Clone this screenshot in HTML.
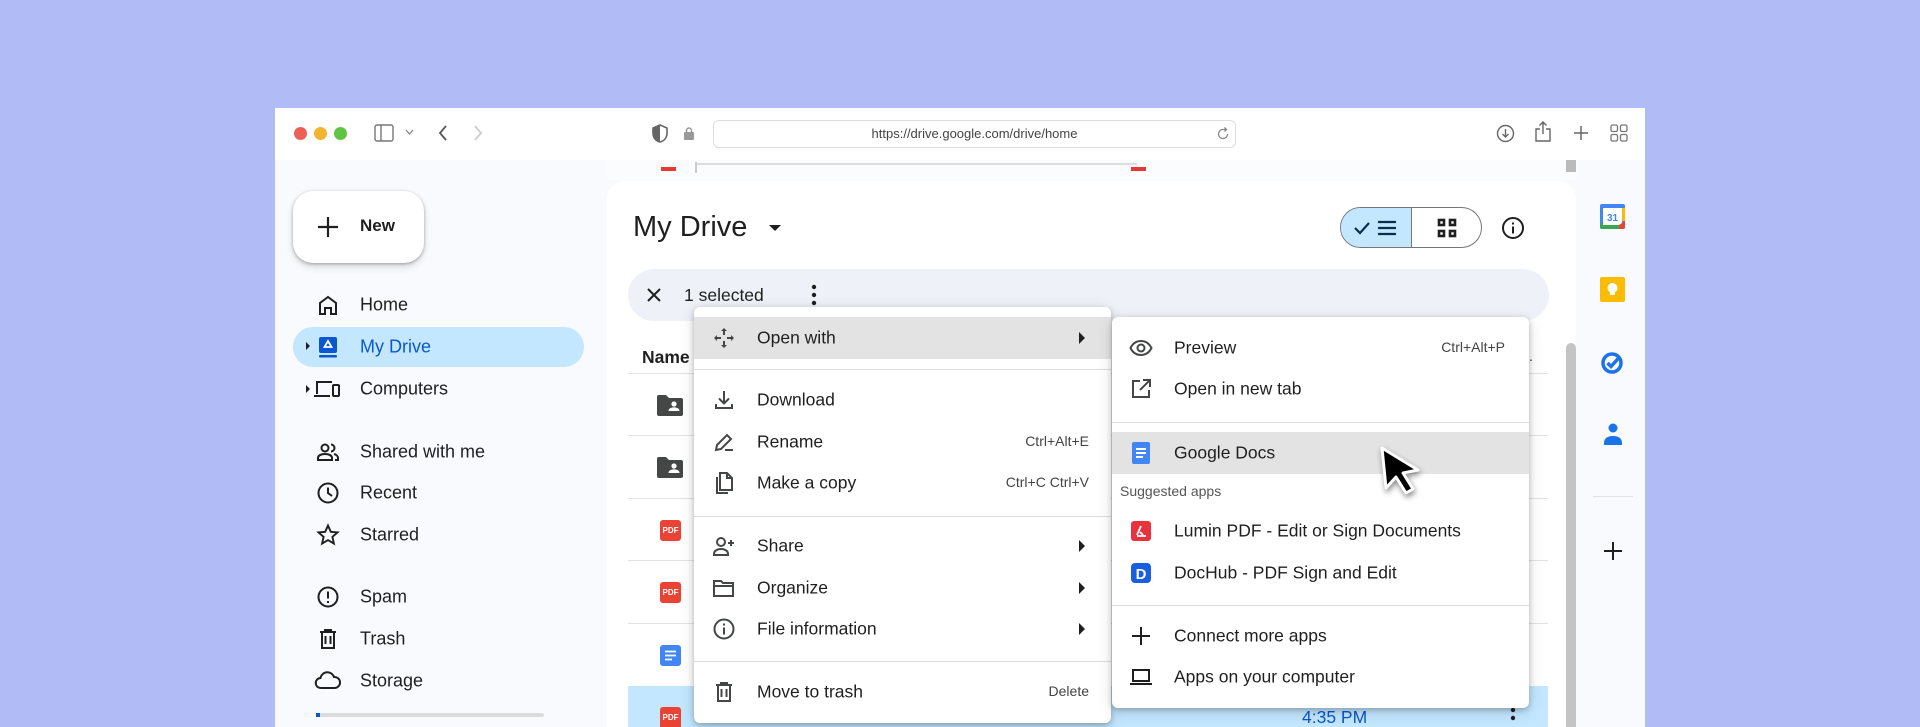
<!DOCTYPE html>
<html style="overflow:hidden;height:727px"><head><meta charset="utf-8"><style>
*{margin:0;padding:0;box-sizing:border-box}
html,body{overflow:hidden}
body{width:1920px;height:727px;background:#b1bbf6;font-family:"Liberation Sans",Arial,sans-serif;color:#1f1f1f;position:relative}
.a{position:absolute}
.win{left:275px;top:108px;width:1370px;height:619px;background:#f8fafd;overflow:hidden}
.tb{left:0;top:0;width:1370px;height:52px;background:#fff}
.nav{position:absolute;left:360px;font-size:18px;color:#1f1f1f;transform:translateY(-50%)}
.ni{position:absolute;left:316px;width:24px;height:24px;transform:translateY(-50%)}
.menu{background:#fff;border-radius:6px;box-shadow:0 2px 6px rgba(0,0,0,.25),0 4px 16px rgba(0,0,0,.12)}
.mi{position:absolute;font-size:17.5px;color:#1f1f1f;transform:translateY(-50%);white-space:nowrap}
.sc{position:absolute;font-size:14px;color:#444;transform:translateY(-50%);text-align:right}
.ic{position:absolute;width:24px;height:24px;transform:translate(-50%,-50%)}
.sep{position:absolute;height:1px;background:#ddd}
.rs{position:absolute;left:628px;width:920px;height:1px;background:#e3e3e3}
#clip{position:absolute;left:0;top:0;width:1920px;height:727px;overflow:hidden}
</style></head><body><div id="clip">
<div class="a win">
 <div class="a tb"></div>
</div>
<div class="a" style="left:294px;top:127px;width:13px;height:13px;border-radius:50%;background:#ec5f57"></div>
<div class="a" style="left:314px;top:127px;width:13px;height:13px;border-radius:50%;background:#f3b52f"></div>
<div class="a" style="left:334px;top:127px;width:13px;height:13px;border-radius:50%;background:#5ec441"></div>
<svg class="a" style="left:374px;top:124px" width="20" height="18" viewBox="0 0 20 18" fill="none" stroke="#777" stroke-width="1.4"><rect x="1" y="1" width="18" height="16" rx="2"/><line x1="7" y1="1" x2="7" y2="17"/></svg>
<svg class="a" style="left:405px;top:129px" width="9" height="7" viewBox="0 0 9 7" fill="none" stroke="#888" stroke-width="1.3"><path d="M1 1l3.5 4 3.5-4"/></svg>
<svg class="a" style="left:437px;top:124px" width="12" height="18" viewBox="0 0 12 18" fill="none" stroke="#555" stroke-width="1.8"><path d="M9 2L3 9l6 7"/></svg>
<svg class="a" style="left:472px;top:124px" width="12" height="18" viewBox="0 0 12 18" fill="none" stroke="#ccc" stroke-width="1.8"><path d="M3 2l6 7-6 7"/></svg>
<svg class="a" style="left:652px;top:124px" width="16" height="19" viewBox="0 0 16 19"><path d="M8 1L1 4v5c0 5 3 8 7 9 4-1 7-4 7-9V4z" fill="none" stroke="#666" stroke-width="1.6"/><path d="M8 1v17c-4-1-7-4-7-9V4z" fill="#666"/></svg>
<svg class="a" style="left:684px;top:127px" width="10" height="13" viewBox="0 0 10 13"><rect x="0" y="5" width="10" height="8" rx="1" fill="#999"/><path d="M2.5 5V3.5a2.5 2.5 0 015 0V5" fill="none" stroke="#999" stroke-width="1.5"/></svg>
<div class="a" style="left:713px;top:120px;width:523px;height:28px;border:1px solid #ddd;border-radius:6px;background:#fff;font-size:13px;color:#444;text-align:center;line-height:26px">https://drive.google.com/drive/home</div>
<svg class="a" style="left:1216px;top:127px" width="14" height="14" viewBox="0 0 14 14" fill="none" stroke="#888" stroke-width="1.3"><path d="M11.5 7A4.5 4.5 0 117 2.5h3M8.5 0.5l2 2-2 2"/></svg>
<svg class="a" style="left:1496px;top:124px" width="19" height="19" viewBox="0 0 19 19" fill="none" stroke="#666" stroke-width="1.4"><circle cx="9.5" cy="9.5" r="8"/><path d="M9.5 5v8M6.5 10l3 3 3-3"/></svg>
<svg class="a" style="left:1535px;top:121px" width="16" height="21" viewBox="0 0 16 21" fill="none" stroke="#666" stroke-width="1.4"><path d="M5 8H1v12h14V8h-4M8 13V1M4.5 4.5L8 1l3.5 3.5"/></svg>
<svg class="a" style="left:1573px;top:125px" width="16" height="16" viewBox="0 0 16 16" stroke="#666" stroke-width="1.5"><path d="M8 1v14M1 8h14"/></svg>
<svg class="a" style="left:1610px;top:124px" width="18" height="18" viewBox="0 0 18 18" fill="none" stroke="#777" stroke-width="1.3"><rect x="1" y="1" width="6.5" height="6.5" rx="1.5"/><rect x="10.5" y="1" width="6.5" height="6.5" rx="1.5"/><rect x="1" y="10.5" width="6.5" height="6.5" rx="1.5"/><rect x="10.5" y="10.5" width="6.5" height="6.5" rx="1.5"/></svg>

<div class="a" style="left:607px;top:160px;width:970px;height:20px;background:#fbfcfe"></div>
<div class="a" style="left:661px;top:167px;width:15px;height:4px;background:#e53935"></div>
<div class="a" style="left:695px;top:162px;width:2px;height:11px;background:#ccc"></div>
<div class="a" style="left:697px;top:163px;width:440px;height:2px;background:#ddd"></div>
<div class="a" style="left:1131px;top:167px;width:15px;height:4px;background:#e53935"></div>
<div class="a" style="left:1566px;top:160px;width:10px;height:12px;background:#bbb"></div>

<div class="a" style="left:607px;top:181px;width:969px;height:546px;background:#fff;border-radius:18px 18px 0 0"></div>

<div class="a" style="left:293px;top:191px;width:131px;height:72px;background:#fff;border-radius:20px;box-shadow:0 1px 3px rgba(0,0,0,.3),0 4px 8px rgba(0,0,0,.12)"></div>
<svg class="a" style="left:316px;top:215px" width="24" height="24" viewBox="0 0 24 24" stroke="#1f1f1f" stroke-width="2.2"><path d="M12 2v20M2 12h20"/></svg>
<div class="a" style="left:360px;top:216px;font-size:17px;font-weight:bold;color:#1f1f1f">New</div>

<div class="a" style="left:293px;top:327px;width:291px;height:40px;border-radius:20px;background:#c2e7ff"></div>
<svg class="ni" style="top:305px" viewBox="0 0 24 24" fill="none" stroke="#1f1f1f" stroke-width="2"><path d="M4 21V10l8-6 8 6v11h-5v-6H9v6z"/></svg><div class="nav" style="top:305px">Home</div>
<div class="a" style="left:306px;top:342px;border-left:4px solid #1f1f1f;border-top:4px solid transparent;border-bottom:4px solid transparent"></div>
<svg class="ni" style="top:347px" viewBox="0 0 24 24"><rect x="3" y="2" width="18" height="16" rx="2" fill="#0b57d0"/><rect x="3" y="20" width="18" height="2.5" rx="1" fill="#0b57d0"/><path d="M12 6l3.5 6h-7z" fill="none" stroke="#fff" stroke-width="1.8"/></svg><div class="nav" style="top:347px;color:#0b57d0">My Drive</div>
<div class="a" style="left:306px;top:385px;border-left:4px solid #1f1f1f;border-top:4px solid transparent;border-bottom:4px solid transparent"></div>
<svg class="ni" style="top:389px;left:313px;width:28px" viewBox="0 0 28 24" fill="none" stroke="#1f1f1f" stroke-width="2"><path d="M4 17V5h15M1 19h16"/><rect x="20" y="8" width="6" height="11" rx="1"/></svg><div class="nav" style="top:389px">Computers</div>
<svg class="ni" style="top:452px" viewBox="0 0 24 24" fill="none" stroke="#1f1f1f" stroke-width="2"><circle cx="9" cy="8" r="3.5"/><path d="M2 20v-2c0-2.5 3-4 7-4s7 1.5 7 4v2zM15 4.5a3.5 3.5 0 010 7M18 14c2 .5 4 2 4 4v2h-3"/></svg><div class="nav" style="top:452px">Shared with me</div>
<svg class="ni" style="top:493px" viewBox="0 0 24 24" fill="none" stroke="#1f1f1f" stroke-width="2"><circle cx="12" cy="12" r="9.5"/><path d="M12 6.5V12l4 3"/></svg><div class="nav" style="top:493px">Recent</div>
<svg class="ni" style="top:535px" viewBox="0 0 24 24" fill="none" stroke="#1f1f1f" stroke-width="1.9"><path d="M12 2.5l2.8 6.3 6.7.6-5.1 4.5 1.5 6.7L12 17.1l-5.9 3.5 1.5-6.7-5.1-4.5 6.7-.6z"/></svg><div class="nav" style="top:535px">Starred</div>
<svg class="ni" style="top:597px" viewBox="0 0 24 24" fill="none" stroke="#1f1f1f" stroke-width="2"><circle cx="12" cy="12" r="9.5"/><path d="M12 6.5v7M12 16v2"/></svg><div class="nav" style="top:597px">Spam</div>
<svg class="ni" style="top:639px" viewBox="0 0 24 24" fill="none" stroke="#1f1f1f" stroke-width="2"><path d="M4 5h16M6 5v16h12V5M9.5 9v8M14.5 9v8M9 5V3h6v2"/></svg><div class="nav" style="top:639px">Trash</div>
<svg class="ni" style="top:681px;left:314px;width:28px" viewBox="0 0 28 24" fill="none" stroke="#1f1f1f" stroke-width="2"><path d="M7 19a5 5 0 01-.5-10A7 7 0 0120 8a5.5 5.5 0 011 11z"/></svg><div class="nav" style="top:681px">Storage</div>
<div class="a" style="left:318px;top:713px;width:226px;height:4px;background:#dcdcdc;border-radius:2px"></div>
<div class="a" style="left:316px;top:713px;width:4px;height:4px;background:#0b57d0"></div>

<div class="a" style="left:633px;top:211px;font-size:29px;color:#1f1f1f">My Drive</div>
<div class="a" style="left:769px;top:225px;border-top:6px solid #1f1f1f;border-left:6px solid transparent;border-right:6px solid transparent"></div>
<div class="a" style="left:1340px;top:207px;width:142px;height:41px;border:1px solid #747775;border-radius:21px;overflow:hidden;background:#fff">
 <div class="a" style="left:0;top:0;width:71px;height:41px;background:#c2e7ff;border-right:1px solid #747775"></div>
</div>
<svg class="a" style="left:1354px;top:219px" width="46" height="18" viewBox="0 0 46 18" fill="none" stroke="#0b2e4e" stroke-width="2.2"><path d="M1 9l5 5 9-10M24 3h18M24 9h18M24 15h18"/></svg>
<svg class="a" style="left:1437px;top:218px" width="20" height="20" viewBox="0 0 20 20" fill="none" stroke="#1f1f1f" stroke-width="2.6"><rect x="2" y="2" width="5" height="5"/><rect x="13" y="2" width="5" height="5"/><rect x="2" y="13" width="5" height="5"/><rect x="13" y="13" width="5" height="5"/></svg>
<svg class="a" style="left:1501px;top:216px" width="24" height="24" viewBox="0 0 24 24" fill="none" stroke="#1f1f1f" stroke-width="2"><circle cx="12" cy="12" r="10"/><path d="M12 10.5v7M12 6.5v2"/></svg>

<div class="a" style="left:628px;top:269px;width:921px;height:52px;background:#eef2f8;border-radius:26px"></div>
<svg class="a" style="left:646px;top:287px" width="16" height="16" viewBox="0 0 16 16" stroke="#1f1f1f" stroke-width="2"><path d="M2 2l12 12M14 2L2 14"/></svg>
<div class="a" style="left:684px;top:285px;font-size:17.5px;color:#1f1f1f">1 selected</div>
<svg class="a" style="left:811px;top:284px" width="6" height="22" viewBox="0 0 6 22" fill="#1f1f1f"><circle cx="3" cy="3" r="2.2"/><circle cx="3" cy="11" r="2.2"/><circle cx="3" cy="19" r="2.2"/></svg>

<div class="a" style="left:642px;top:347px;font-size:17.5px;font-weight:bold;color:#1f1f1f">Name</div>
<div class="rs" style="top:373px"></div>
<div class="rs" style="top:435px"></div>
<div class="rs" style="top:498px"></div>
<div class="rs" style="top:560px"></div>
<div class="rs" style="top:623px"></div>
<div class="a" style="left:628px;top:686px;width:920px;height:41px;background:#c2e7ff"></div>
<svg class="a" style="left:657px;top:394px" width="26" height="22" viewBox="0 0 26 22"><path d="M0 3a2 2 0 012-2h7l3 3h12a2 2 0 012 2v14a2 2 0 01-2 2H2a2 2 0 01-2-2z" fill="#444746"/><circle cx="17" cy="10" r="2.6" fill="#fff"/><path d="M11.5 17c0-2.5 2.5-3.6 5.5-3.6s5.5 1.1 5.5 3.6z" fill="#fff"/></svg>
<svg class="a" style="left:657px;top:456px" width="26" height="22" viewBox="0 0 26 22"><path d="M0 3a2 2 0 012-2h7l3 3h12a2 2 0 012 2v14a2 2 0 01-2 2H2a2 2 0 01-2-2z" fill="#444746"/><circle cx="17" cy="10" r="2.6" fill="#fff"/><path d="M11.5 17c0-2.5 2.5-3.6 5.5-3.6s5.5 1.1 5.5 3.6z" fill="#fff"/></svg>
<div class="a" style="left:660px;top:520px;width:21px;height:21px;background:#ea4335;border-radius:3px;color:#fff;font-size:8px;font-weight:bold;text-align:center;line-height:21px">PDF</div>
<div class="a" style="left:660px;top:582px;width:21px;height:21px;background:#ea4335;border-radius:3px;color:#fff;font-size:8px;font-weight:bold;text-align:center;line-height:21px">PDF</div>
<svg class="a" style="left:660px;top:645px" width="21" height="21" viewBox="0 0 21 21"><rect width="21" height="21" rx="3" fill="#4285f4"/><path d="M5 6.5h11M5 10.5h11M5 14.5h7" stroke="#fff" stroke-width="1.8"/></svg>
<div class="a" style="left:660px;top:707px;width:21px;height:20px;background:#ea4335;border-radius:3px 3px 0 0;color:#fff;font-size:8px;font-weight:bold;text-align:center;line-height:21px">PDF</div>
<div class="a" style="left:1302px;top:707px;font-size:17.5px;color:#0b57d0">4:35 PM</div>
<svg class="a" style="left:1510px;top:707px" width="6" height="20" viewBox="0 0 6 20" fill="#1f1f1f"><circle cx="3" cy="3" r="2.2"/><circle cx="3" cy="11" r="2.2"/></svg>
<div class="a" style="left:1529px;top:348px;font-size:14px;color:#444">.</div>

<div class="a" style="left:1566px;top:343px;width:10px;height:384px;background:#c4c4c4;border-radius:5px 5px 0 0"></div>

<div class="a" style="left:1577px;top:160px;width:68px;height:567px;background:#f8fafd"></div>
<svg class="a" style="left:1600px;top:204px" width="25" height="25" viewBox="0 0 25 25"><rect x="0" y="0" width="25" height="25" rx="2" fill="#4285f4"/><rect x="3" y="4" width="19" height="17" fill="#fff"/><path d="M0 19h3v6H2a2 2 0 01-2-2z" fill="#34a853"/><path d="M3 21h16v4H3z" fill="#34a853"/><path d="M19 21l6-4v6a2 2 0 01-2 2h-4z" fill="#ea4335"/><path d="M22 4h3v13h-3z" fill="#fbbc04"/><text x="12.5" y="17" font-size="10" font-family="Liberation Sans" font-weight="bold" fill="#4285f4" text-anchor="middle">31</text></svg>
<svg class="a" style="left:1600px;top:277px" width="25" height="25" viewBox="0 0 25 25"><rect width="25" height="25" rx="2" fill="#fbbc04"/><circle cx="12.5" cy="11" r="5" fill="#fff"/><rect x="10" y="15" width="5" height="3" fill="#fff"/></svg>
<svg class="a" style="left:1600px;top:350px" width="25" height="25" viewBox="0 0 25 25" fill="none"><circle cx="12" cy="13" r="9" stroke="#1a73e8" stroke-width="3.5"/><path d="M7.5 13l3.5 3.5 9-10" stroke="#1a73e8" stroke-width="3.5"/></svg>
<svg class="a" style="left:1603px;top:423px" width="20" height="24" viewBox="0 0 20 24" fill="#1a73e8"><circle cx="10" cy="5" r="4.5"/><path d="M1 20c0-5 4-7 9-7s9 2 9 7v2H1z"/></svg>
<div class="a" style="left:1593px;top:496px;width:40px;height:1px;background:#e3e3e3"></div>
<svg class="a" style="left:1603px;top:541px" width="20" height="20" viewBox="0 0 20 20" stroke="#1f1f1f" stroke-width="2"><path d="M10 1v18M1 10h18"/></svg>

<div class="a menu" style="left:694px;top:307px;width:417px;height:416px"></div>
<div class="a" style="left:694px;top:317px;width:417px;height:42px;background:#e3e3e3"></div>
<svg class="ic" style="left:724px;top:338px" viewBox="0 0 24 24" fill="#444746"><path d="M12 2l3 3h-2v4h-2V5H9zM12 22l-3-3h2v-4h2v4h2zM2 12l3-3v2h4v2H5v2zM22 12l-3 3v-2h-4v-2h4V9z"/></svg>
<div class="mi" style="left:757px;top:338px">Open with</div>
<div class="a" style="left:1079px;top:332px;border-left:6px solid #1f1f1f;border-top:6px solid transparent;border-bottom:6px solid transparent"></div>
<div class="sep" style="left:694px;top:369px;width:417px"></div>
<svg class="ic" style="left:724px;top:400px" viewBox="0 0 24 24" fill="none" stroke="#444746" stroke-width="2"><path d="M12 3v12M7 10.5l5 5 5-5M4 16v4h16v-4"/></svg>
<div class="mi" style="left:757px;top:400px">Download</div>
<svg class="ic" style="left:724px;top:442px" viewBox="0 0 24 24" fill="none" stroke="#444746" stroke-width="2"><path d="M4 20l1-5L15 5l4 4L9 19zM13 20h8"/></svg>
<div class="mi" style="left:757px;top:442px">Rename</div>
<div class="sc" style="right:831px;top:441px">Ctrl+Alt+E</div>
<svg class="ic" style="left:724px;top:483px" viewBox="0 0 24 24" fill="none" stroke="#444746" stroke-width="2"><path d="M8 2h7l5 5v12H8zM15 2v5h5M5 6v16h11"/></svg>
<div class="mi" style="left:757px;top:483px">Make a copy</div>
<div class="sc" style="right:831px;top:482px">Ctrl+C Ctrl+V</div>
<div class="sep" style="left:694px;top:516px;width:417px"></div>
<svg class="ic" style="left:724px;top:546px" viewBox="0 0 24 24" fill="none" stroke="#444746" stroke-width="2"><circle cx="9" cy="8" r="4"/><path d="M2 21v-1c0-3 3-5 7-5s7 2 7 5v1zM19 6v6M16 9h6"/></svg>
<div class="mi" style="left:757px;top:546px">Share</div>
<div class="a" style="left:1079px;top:540px;border-left:6px solid #1f1f1f;border-top:6px solid transparent;border-bottom:6px solid transparent"></div>
<svg class="ic" style="left:724px;top:588px" viewBox="0 0 24 24" fill="none" stroke="#444746" stroke-width="2"><path d="M2 5h7l2 2h10v13H2zM2 10h19"/></svg>
<div class="mi" style="left:757px;top:588px">Organize</div>
<div class="a" style="left:1079px;top:582px;border-left:6px solid #1f1f1f;border-top:6px solid transparent;border-bottom:6px solid transparent"></div>
<svg class="ic" style="left:724px;top:629px" viewBox="0 0 24 24" fill="none" stroke="#444746" stroke-width="2"><circle cx="12" cy="12" r="9.5"/><path d="M12 10.5v7M12 6.5v2"/></svg>
<div class="mi" style="left:757px;top:629px">File information</div>
<div class="a" style="left:1079px;top:623px;border-left:6px solid #1f1f1f;border-top:6px solid transparent;border-bottom:6px solid transparent"></div>
<div class="sep" style="left:694px;top:661px;width:417px"></div>
<svg class="ic" style="left:724px;top:692px" viewBox="0 0 24 24" fill="none" stroke="#444746" stroke-width="2"><path d="M4 5h16M6 5v16h12V5M9.5 9v8M14.5 9v8M9 5V3h6v2"/></svg>
<div class="mi" style="left:757px;top:692px">Move to trash</div>
<div class="sc" style="right:831px;top:691px">Delete</div>

<div class="a menu" style="left:1112px;top:317px;width:417px;height:391px"></div>
<svg class="ic" style="left:1141px;top:348px" viewBox="0 0 24 24" fill="none" stroke="#444746" stroke-width="2"><path d="M1.5 12C4 7 8 5 12 5s8 2 10.5 7C20 17 16 19 12 19s-8-2-10.5-7z"/><circle cx="12" cy="12" r="3.5"/></svg>
<div class="mi" style="left:1174px;top:348px">Preview</div>
<div class="sc" style="right:415px;top:347px">Ctrl+Alt+P</div>
<svg class="ic" style="left:1141px;top:389px" viewBox="0 0 24 24" fill="none" stroke="#444746" stroke-width="2"><path d="M11 4H4v16h16v-7M14 3h7v7M21 3l-10 10"/></svg>
<div class="mi" style="left:1174px;top:389px">Open in new tab</div>
<div class="sep" style="left:1112px;top:422px;width:417px"></div>
<div class="a" style="left:1112px;top:432px;width:417px;height:42px;background:#e3e3e3"></div>
<svg class="ic" style="left:1141px;top:453px" viewBox="0 0 24 24"><rect x="3" y="1" width="18" height="22" rx="2" fill="#4285f4"/><path d="M7 8h10M7 12h10M7 16h7" stroke="#fff" stroke-width="2"/></svg>
<div class="mi" style="left:1174px;top:453px">Google Docs</div>
<div class="mi" style="left:1120px;top:491px;font-size:14px;color:#555">Suggested apps</div>
<svg class="ic" style="left:1141px;top:531px" viewBox="0 0 24 24"><rect x="2" y="2" width="20" height="20" rx="3" fill="#e8333f"/><path d="M12 7l-4 9M11 13l3 3M8 17h9" stroke="#fff" stroke-width="1.8" fill="none"/></svg>
<div class="mi" style="left:1174px;top:531px">Lumin PDF - Edit or Sign Documents</div>
<svg class="ic" style="left:1141px;top:573px" viewBox="0 0 24 24"><rect x="2" y="2" width="20" height="20" rx="4" fill="#1a5fe0"/><text x="12" y="18" font-size="15" font-weight="bold" font-family="Liberation Sans" fill="#fff" text-anchor="middle">D</text></svg>
<div class="mi" style="left:1174px;top:573px">DocHub - PDF Sign and Edit</div>
<div class="sep" style="left:1112px;top:605px;width:417px"></div>
<svg class="ic" style="left:1141px;top:636px" viewBox="0 0 24 24" stroke="#1f1f1f" stroke-width="2"><path d="M12 3v18M3 12h18"/></svg>
<div class="mi" style="left:1174px;top:636px">Connect more apps</div>
<svg class="ic" style="left:1141px;top:677px" viewBox="0 0 24 24" fill="none" stroke="#1f1f1f" stroke-width="2"><rect x="4" y="5" width="16" height="11"/><path d="M1 19h22"/></svg>
<div class="mi" style="left:1174px;top:677px">Apps on your computer</div>

<svg class="a" style="left:1378px;top:445px;filter:drop-shadow(1px 3px 3px rgba(0,0,0,.45))" width="44" height="52" viewBox="0 0 44 52"><path d="M4 3l36 22-15 3 10 16-7 4-10-16-10 11z" fill="#000" stroke="#fff" stroke-width="3" stroke-linejoin="round"/></svg>
</div></body></html>
